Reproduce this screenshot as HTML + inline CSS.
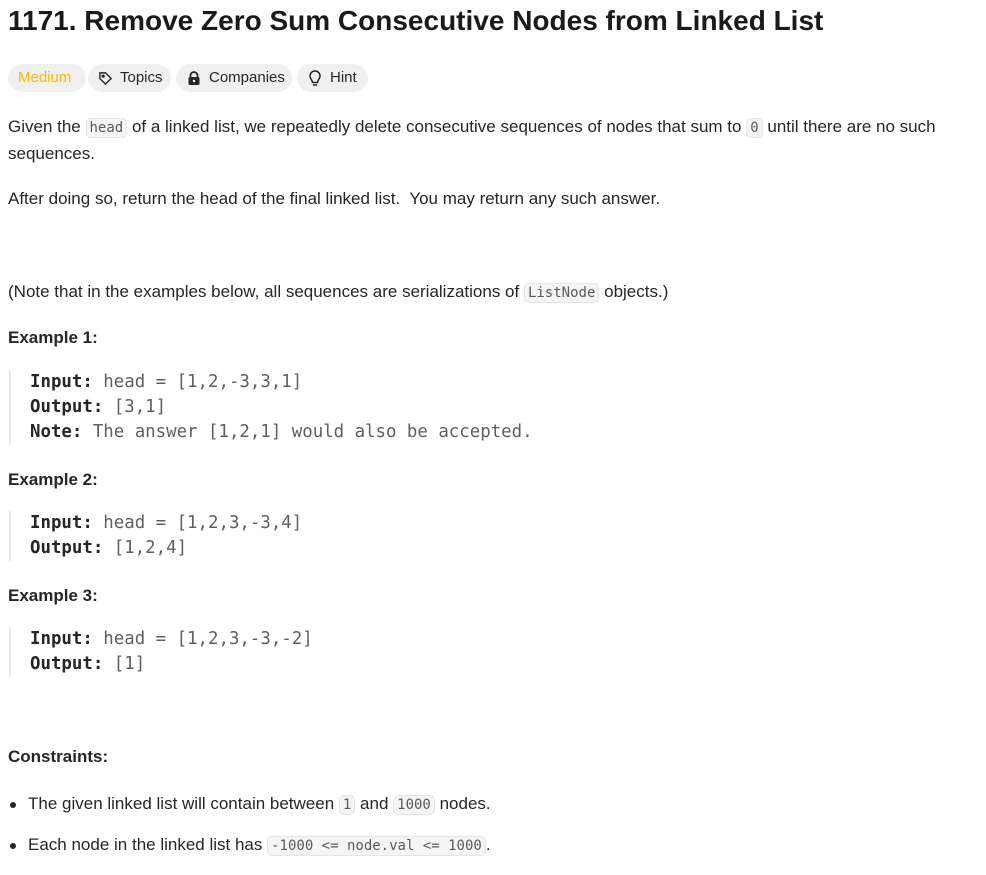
<!DOCTYPE html>
<html><head><meta charset="utf-8"><style>
body{margin:0;background:#fff;color:#262626;font-family:"Liberation Sans",sans-serif;font-size:17px;width:986px;height:875px;overflow:hidden;position:relative}
.a{position:absolute;left:8px;white-space:nowrap}
h1{position:absolute;left:8px;top:5px;margin:0;font-size:28px;font-weight:bold;color:#1a1a1a}
.tag{position:absolute;top:64px;height:28px;border-radius:14px;background:#f0f0f0;font-size:15px;line-height:28px;padding:0 10px;box-sizing:border-box;color:#262626}
code{font-family:"DejaVu Sans Mono",monospace;font-size:14px;background:#f5f5f5;border:1px solid #e5e5e5;border-radius:5px;padding:1px 3px;color:#5a5a5a}
.pre{position:absolute;left:9px;border-left:2px solid #e8e8e8;padding-left:19px;font-family:"DejaVu Sans Mono",monospace;font-size:17.4px;line-height:25px;color:#5f5f5f;white-space:pre}
.pre b{color:#262626}
.dot{position:absolute;left:10px;width:6px;height:6px;border-radius:3px;background:#262626}
</style></head><body>
<h1>1171. Remove Zero Sum Consecutive Nodes from Linked List</h1>
<div class="tag" style="left:8px;width:78px;color:#ffb800">Medium</div>
<div class="tag" style="left:88px;width:83px;padding-left:32px">Topics<svg style="position:absolute;left:10px;top:7px" width="15" height="15" viewBox="0 0 16 16" fill="none" stroke="#262626" stroke-width="1.5"><path d="M2 2h6l6 6-6 6-6-6z"/><circle cx="5.5" cy="5.5" r="1" fill="#262626"/></svg></div>
<div class="tag" style="left:176px;width:116px;padding-left:33px">Companies<svg style="position:absolute;left:11px;top:7px" width="14" height="15" viewBox="0 0 14 15"><path d="M3.5 6V4.5a3.5 3.5 0 0 1 7 0V6" fill="none" stroke="#262626" stroke-width="1.8"/><rect x="1.5" y="6" width="11" height="8" rx="1.5" fill="#262626"/><circle cx="7" cy="10" r="1.2" fill="#fff"/></svg></div>
<div class="tag" style="left:297px;width:71px;padding-left:33px">Hint<svg style="position:absolute;left:11px;top:6px" width="14" height="17" viewBox="0 0 14 17" fill="none" stroke="#262626" stroke-width="1.5"><path d="M4.5 12.5C4.5 10 2 9 2 6a5 5 0 0 1 10 0c0 3-2.5 4-2.5 6.5z"/><path d="M5 15h4"/></svg></div>
<div class="a" style="top:114px;line-height:26px">Given the <code>head</code> of a linked list, we repeatedly delete consecutive sequences of nodes that sum to <code>0</code> until there are no such<br>sequences.</div>
<div class="a" style="top:189px">After doing so, return the head of the final linked list.&nbsp; You may return any such answer.</div>
<div class="a" style="top:282px">(Note that in the examples below, all sequences are serializations of <code>ListNode</code> objects.)</div>
<div class="a" style="top:328px;font-weight:bold">Example 1:</div>
<div class="pre" style="top:370px"><b>Input:</b> head = [1,2,-3,3,1]
<b>Output:</b> [3,1]
<b>Note:</b> The answer [1,2,1] would also be accepted.</div>
<div class="a" style="top:470px;font-weight:bold">Example 2:</div>
<div class="pre" style="top:511px"><b>Input:</b> head = [1,2,3,-3,4]
<b>Output:</b> [1,2,4]</div>
<div class="a" style="top:586px;font-weight:bold">Example 3:</div>
<div class="pre" style="top:627px"><b>Input:</b> head = [1,2,3,-3,-2]
<b>Output:</b> [1]</div>
<div class="a" style="top:747px;font-weight:bold">Constraints:</div>
<div class="dot" style="top:802px"></div>
<div class="a" style="left:28px;top:794px">The given linked list will contain between <code>1</code> and <code>1000</code> nodes.</div>
<div class="dot" style="top:843px"></div>
<div class="a" style="left:28px;top:835px">Each node in the linked list has <code>-1000 &lt;= node.val &lt;= 1000</code>.</div>
</body></html>
